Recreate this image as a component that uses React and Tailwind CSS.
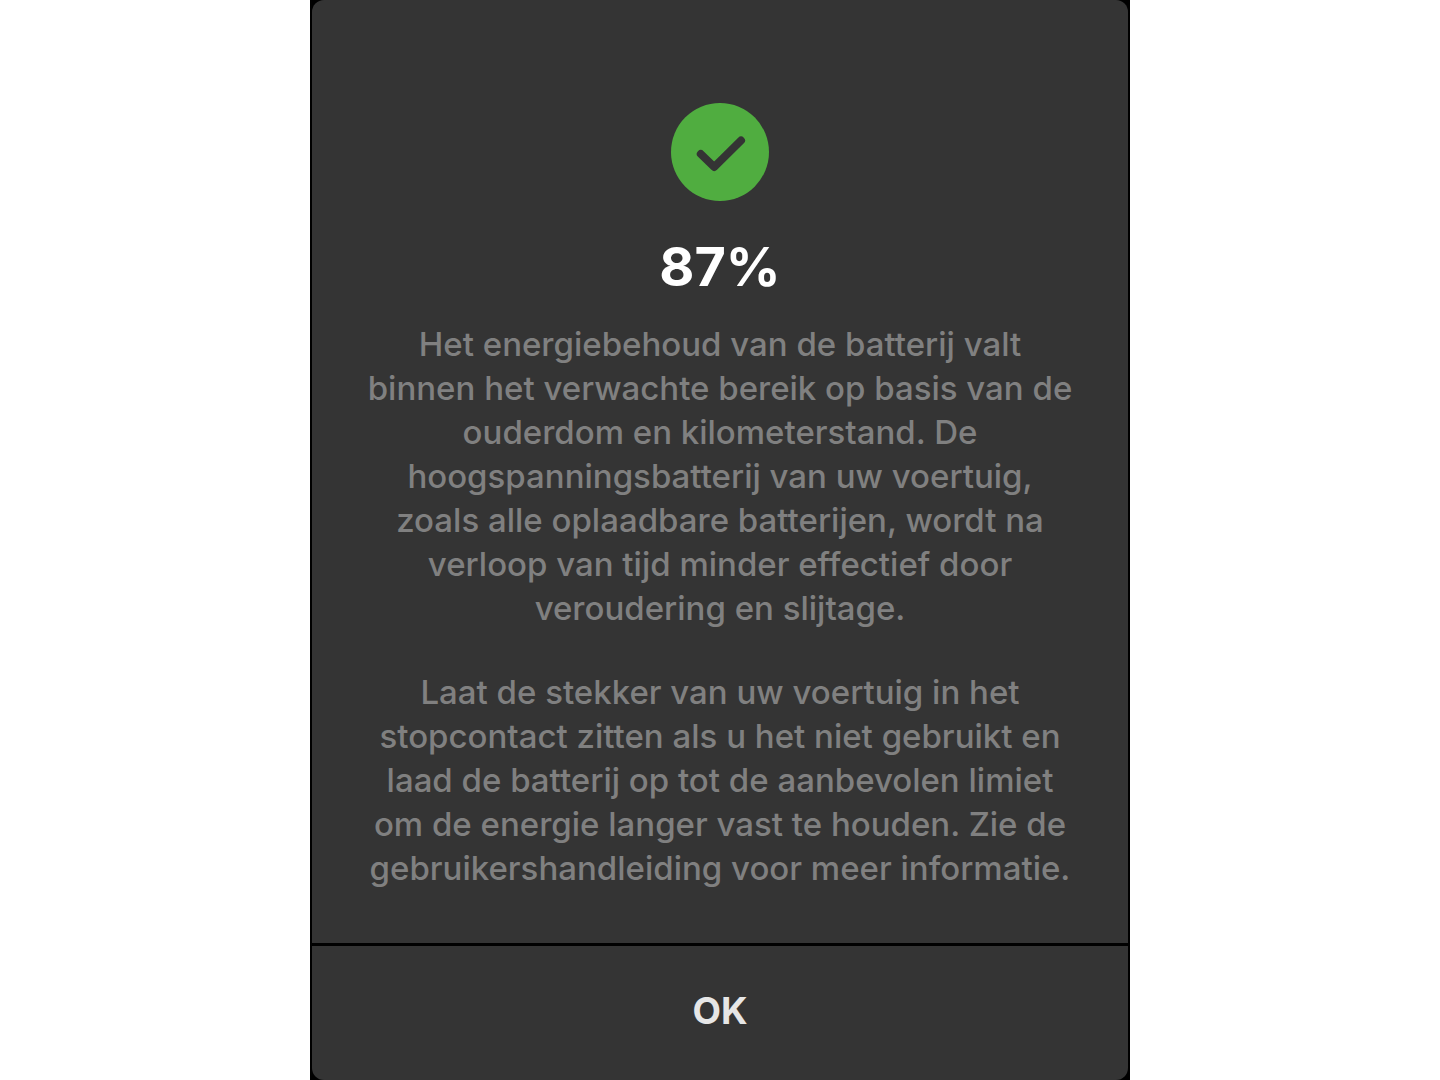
const paragraphs = [
  [
    "Het energiebehoud van de batterij valt",
    "binnen het verwachte bereik op basis van de",
    "ouderdom en kilometerstand. De",
    "hoogspanningsbatterij van uw voertuig,",
    "zoals alle oplaadbare batterijen, wordt na",
    "verloop van tijd minder effectief door",
    "veroudering en slijtage.",
  ],
  [
    "Laat de stekker van uw voertuig in het",
    "stopcontact zitten als u het niet gebruikt en",
    "laad de batterij op tot de aanbevolen limiet",
    "om de energie langer vast te houden. Zie de",
    "gebruikershandleiding voor meer informatie.",
  ],
];

function CheckBadge() {
  return (
    <svg viewBox="0 0 98 98" className="size-[98px]" aria-hidden="true">
      <circle cx="49" cy="49" r="49" fill="#50ad40" />
      <path
        d="M29.8 51 L43.2 64 L70 37.5"
        fill="none"
        stroke="#343434"
        strokeWidth="8"
        strokeLinecap="round"
        strokeLinejoin="round"
      />
    </svg>
  );
}

export default function App() {
  return (
    <main className="flex min-h-screen justify-center bg-white font-['Inter',sans-serif]">
      <div className="flex w-full max-w-[820px] bg-black px-0.5">
        <section
          role="dialog"
          aria-labelledby="battery-title"
          className="flex w-full flex-col overflow-hidden rounded-xl bg-[#343434]"
        >
          <div className="flex flex-1 flex-col items-center px-6 pt-[103px] pb-12">
            <CheckBadge />
            <h1 id="battery-title" className="mt-9 text-[54px] leading-[60px] font-bold text-white">
              87%
            </h1>
            <div className="mt-[25px] flex flex-col gap-10 text-center text-[33px] leading-[44px] font-medium text-[#808080]">
              {paragraphs.map((lines) => (
                <p key={lines[0]}>
                  {lines.map((line) => (
                    <span key={line} className="block">
                      {line}{" "}
                    </span>
                  ))}
                </p>
              ))}
            </div>
          </div>
          <button
            type="button"
            className="h-[137px] border-t-3 border-black pb-1 text-[37px] font-bold text-[#e6e6e6]"
          >
            OK
          </button>
        </section>
      </div>
    </main>
  );
}
